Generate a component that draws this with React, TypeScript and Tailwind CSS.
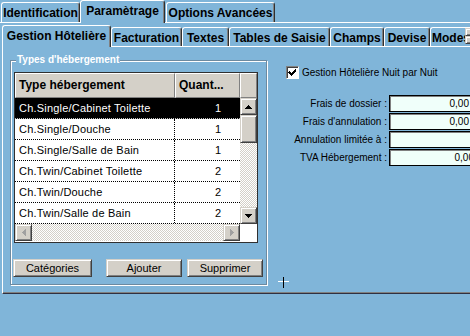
import React from "react";

const raised =
  "bg-[#d4d0c8] border border-t-[#d4d0c8] border-l-[#d4d0c8] border-r-[#404040] border-b-[#404040] shadow-[inset_1px_1px_0_#ffffff,inset_-1px_-1px_0_#808080]";

function Tri({ dir, color = "#000" }: { dir: "up" | "down" | "left" | "right"; color?: string }) {
  const pts =
    dir === "up"
      ? "0,4 7,4 3.5,0"
      : dir === "down"
      ? "0,0 7,0 3.5,4"
      : dir === "left"
      ? "4,0 4,7 0,3.5"
      : "0,0 0,7 4,3.5";
  const w = dir === "up" || dir === "down" ? 7 : 4;
  const h = dir === "up" || dir === "down" ? 4 : 7;
  return (
    <svg width={w} height={h} viewBox={`0 0 ${w} ${h}`} shapeRendering="crispEdges">
      <polygon points={pts} fill={color} />
    </svg>
  );
}

function TopTab({ label, w, selected }: { label: string; w: number; selected?: boolean }) {
  return (
    <div
      style={{ width: w }}
      className={
        "flex justify-center border-l border-t border-white border-r border-r-[#303030] shadow-[inset_-1px_0_0_#808080] rounded-t-[3px] text-[12px] font-bold leading-none " +
        (selected
          ? "h-[23px] -mb-px relative z-10 bg-[#80b5d9] pt-[4px]"
          : "h-[20px] pt-[4px]")
      }
    >
      {label}
    </div>
  );
}

function SubTab({
  label,
  w,
  selected,
  left,
}: {
  label: string;
  w: number;
  selected?: boolean;
  left?: boolean;
}) {
  return (
    <div
      style={{ width: w }}
      className={
        "flex shrink-0 overflow-hidden border-l border-t border-white border-r border-r-[#303030] shadow-[inset_-1px_0_0_#808080] rounded-t-[3px] text-[12px] font-bold leading-none whitespace-nowrap " +
        (left ? "justify-start pl-[1px] " : "justify-center ") +
        (selected
          ? "h-[22px] -mb-px relative z-10 bg-[#80b5d9] pt-[4px]"
          : "h-[19px] pt-[4px]")
      }
    >
      {label}
    </div>
  );
}

export default function App() {
  const rows: [string, string][] = [
    ["Ch.Single/Cabinet Toilette", "1"],
    ["Ch.Single/Douche", "1"],
    ["Ch.Single/Salle de Bain", "1"],
    ["Ch.Twin/Cabinet Toilette", "2"],
    ["Ch.Twin/Douche", "2"],
    ["Ch.Twin/Salle de Bain", "2"],
  ];
  const fields: [string, string, string][] = [
    ["Frais de dossier :", "0,00", "pr-[19px]"],
    ["Frais d'annulation :", "0,00", "pr-[19px]"],
    ["Annulation limitée à :", "", "pr-[19px]"],
    ["TVA Hébergement :", "0,00", "pr-[14px]"],
  ];
  return (
    <div className="w-[470px] h-[336px] overflow-hidden bg-[#80b5d9] text-black font-['Liberation_Sans',Arial,sans-serif] relative">
      {/* top-level tabs */}
      <div className="flex items-end h-[23px] border-b border-white pl-[1px]">
        <TopTab label="Identification" w={79} />
        <TopTab label="Paramètrage" w={85} selected />
        <div className="w-[1px]" />
        <TopTab label="Options Avancées" w={109} />
      </div>

      {/* second-level tabs */}
      <div className="relative mt-[3px] ml-[2px] flex items-end h-[21px] border-b border-white w-[600px]">
        <SubTab label="Gestion Hôtelière" w={109} selected />
        <SubTab label="Facturation" w={71} />
        <SubTab label="Textes" w={47} />
        <SubTab label="Tables de Saisie" w={101} />
        <SubTab label="Champs" w={54} />
        <SubTab label="Devise" w={46} />
        <SubTab label="Modes de règlement" w={140} left />
        <div className="absolute left-[463px] top-[2px] w-[16px] h-[16px] flex flex-col">
          <div className={raised + " h-[8px] flex items-center justify-center"}>
            <Tri dir="up" />
          </div>
          <div className={raised + " h-[8px] flex items-center justify-center"}>
            <Tri dir="down" />
          </div>
        </div>
      </div>

      {/* panel */}
      <div className="relative ml-[2px] w-[600px] h-[247px] border-l border-white border-b border-b-[#303040] shadow-[inset_0_-1px_0_#808080] flex">
        {/* group box */}
        <div className="relative ml-[7px] mt-[13px] w-[257px] h-[225px] border border-[#6d8aa0] shadow-[inset_1px_1px_0_#ffffff,1px_1px_0_#ffffff] pl-[3px] pt-[11px] flex flex-col">
          <div className="absolute -top-[8px] left-[5px] px-[1px] bg-[#80b5d9] text-white font-bold text-[10px] leading-[14px]">
            Types d'hébergement
          </div>
          {/* table */}
          <div className="w-[244px] h-[171px] border border-[#303030] bg-white flex flex-col">
            <div className="flex h-[25px] shrink-0">
              <div className="w-[160px] bg-[#d4d0c8] border-t border-l border-white border-r border-b border-r-[#808080] border-b-[#808080] text-[12px] font-bold leading-[23px] pl-[3px]">
                Type hébergement
              </div>
              <div className="w-[65px] bg-[#d4d0c8] border-t border-l border-white border-r border-b border-r-[#808080] border-b-[#808080] text-[12px] font-bold leading-[23px] pl-[3px]">
                Quant...
              </div>
              <div className="w-[17px] bg-[#d4d0c8] border-t border-l border-white border-r border-b border-r-[#808080] border-b-[#808080]" />
            </div>
            <div className="flex h-[126px]">
              <div className="w-[225px] flex flex-col">
                {rows.map(([name, q], i) => (
                  <div
                    key={name}
                    className={
                      "flex h-[21px] border-b border-dotted text-[11px] leading-[20px] " +
                      (i === 0 ? "bg-black text-white border-b-[#bbbbbb]" : "border-b-black")
                    }
                  >
                    <div className="w-[160px] pl-[4px] border-r border-dotted border-r-black tracking-[0.2px]">
                      {name}
                    </div>
                    <div className="w-[65px] text-right pr-[19px]">{q}</div>
                  </div>
                ))}
              </div>
              {/* vertical scrollbar */}
              <div className="w-[17px] flex flex-col bg-[repeating-conic-gradient(#d4d0c8_0%_25%,#ffffff_0%_50%)] bg-[length:2px_2px]">
                <div className={raised + " h-[17px] flex items-center justify-center"}>
                  <Tri dir="up" />
                </div>
                <div className={raised + " h-[28px]"} />
                <div className="flex-1" />
                <div className={raised + " h-[17px] flex items-center justify-center"}>
                  <Tri dir="down" />
                </div>
              </div>
            </div>
            {/* horizontal scrollbar */}
            <div className="flex h-[17px]">
              <div className="w-[225px] flex bg-[repeating-conic-gradient(#d4d0c8_0%_25%,#ffffff_0%_50%)] bg-[length:2px_2px]">
                <div className={raised + " w-[17px] flex items-center justify-center"}>
                  <Tri dir="left" color="#a0a0a0" />
                </div>
                <div className="flex-1" />
                <div className={raised + " w-[17px] flex items-center justify-center"}>
                  <Tri dir="right" color="#a0a0a0" />
                </div>
              </div>
              <div className="w-[17px] bg-white" />
            </div>
          </div>
          {/* buttons */}
          <div className="flex mt-[16px] -ml-[1px] text-[11px]">
            <div className={raised + " w-[79px] h-[18px] flex items-center justify-center"}>Catégories</div>
            <div className={raised + " ml-[14px] w-[76px] h-[18px] flex items-center justify-center"}>Ajouter</div>
            <div className={raised + " ml-[5px] w-[76px] h-[18px] flex items-center justify-center"}>Supprimer</div>
          </div>
        </div>

        {/* right column */}
        <div className="ml-[1px] flex flex-col">
          <div className="mt-[19px] ml-[18px] flex items-center h-[13px]">
            <div className="w-[13px] h-[13px] bg-white border border-t-[#808080] border-l-[#808080] border-r-white border-b-white shadow-[inset_1px_1px_0_#404040] flex items-center justify-center">
              <svg width="9" height="9" viewBox="0 0 9 9" shapeRendering="crispEdges">
                <path d="M1 4 L3.5 6.5 L8 1.5" stroke="#000" strokeWidth="2" fill="none" />
              </svg>
            </div>
            <span className="ml-[3px] text-[10px] whitespace-nowrap">Gestion Hôtelière Nuit par Nuit</span>
          </div>
          <div className="mt-[16px] flex flex-col gap-[1px]">
            {fields.map(([label, val, pr]) => (
              <div key={label} className="flex items-center h-[17px]">
                <div className="w-[120px] text-right text-[10px] whitespace-nowrap pr-[1px]">{label}</div>
                <div
                  className={
                    "ml-[1px] w-[100px] h-[17px] bg-[#f0fffa] border border-black shadow-[inset_1px_1px_0_#808080] text-right text-[10px] leading-[15px] " +
                    pr
                  }
                >
                  {val}
                </div>
              </div>
            ))}
          </div>
        </div>

        {/* cursor mark */}
        <div className="absolute left-[275px] top-[234px] w-[11px] h-[1px] bg-white" />
        <div className="absolute left-[280px] top-[230px] w-[1px] h-[11px] bg-black" />
      </div>
    </div>
  );
}
